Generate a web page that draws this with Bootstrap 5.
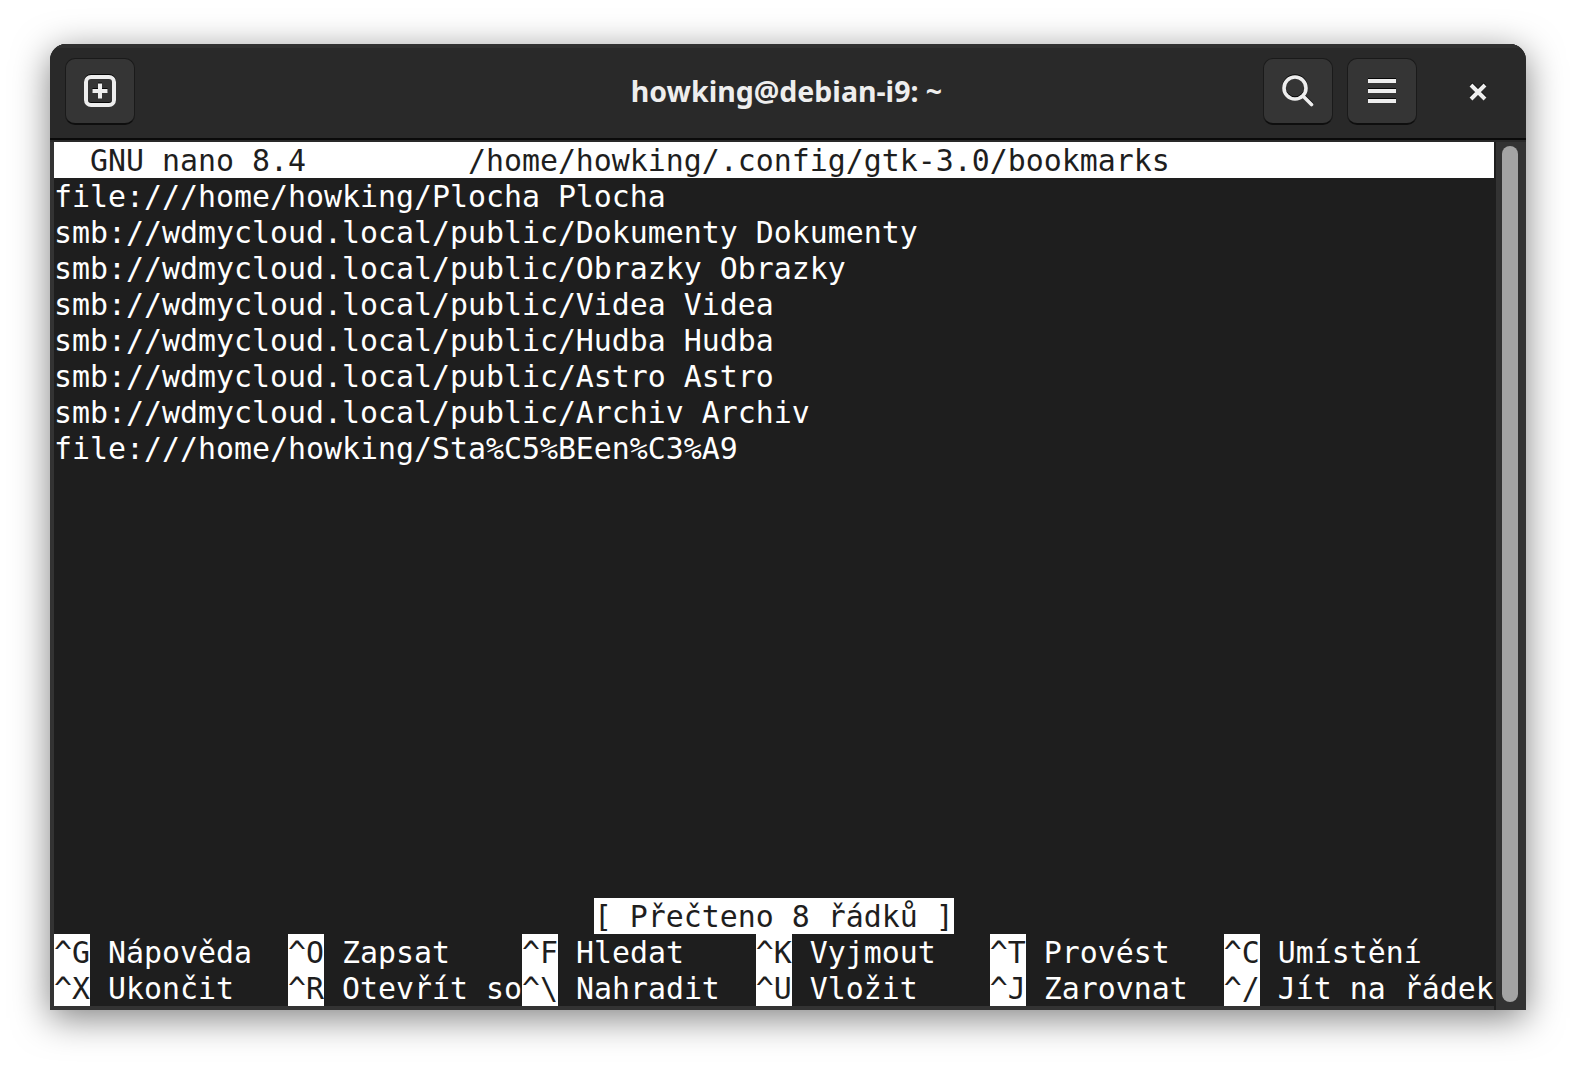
<!DOCTYPE html>
<html lang="cs">
<head>
<meta charset="utf-8">
<title>howking@debian-i9: ~</title>
<link href="https://cdn.jsdelivr.net/npm/bootstrap@5.3.0/dist/css/bootstrap.min.css" rel="stylesheet">
<style>
html,body{height:100%;background:#fff;overflow:hidden}
.shell{padding:44px 50px 56px 50px;height:1066px}
.win{height:966px;background:#1e1e1e;border-radius:16px 16px 0 0;box-shadow:0 8px 36px rgba(0,0,0,.5);overflow:hidden}
.tbar{height:94px;background:#292929;border-top:4px solid #303030;padding:10px 13px 0 15px;box-sizing:border-box}
.tside{flex:1 1 0}
.tbtn{width:70px;height:67px;background:#353535;border-radius:10px;border:1px solid #1a1a1a;border-bottom:2px solid #0e0e0e;box-sizing:border-box}
.tbtn svg,.closebox svg{filter:drop-shadow(0 -1px 0 rgba(0,0,0,.85))}
.tgap{margin-right:14px}
.ttl{font:700 28.5px "Noto Sans",sans-serif;color:#eee;height:67px;line-height:66px;margin-right:5px}
.closebox{width:70px;height:67px;margin-left:26px}
.sep{height:2px;background:#292929;border-top:2px solid #0a0a0a;box-sizing:content-box}
.termedge{width:4px;background:#333}
.term{width:1440px;background:#1e1e1e;font:29.9px/37px "DejaVu Sans Mono",monospace;color:#fff}
.ln{height:36px;overflow:hidden;white-space:pre}
.inv{background:#fff;color:#1e1e1e}
span.inv{display:inline-block;height:36px;vertical-align:top}
.termgap{width:2px;background:#1e1e1e}
.sbar{width:30px;background:#333;padding:4px 8px 8px 6px}
.thumb{width:16px;height:100%;background:#a4a4a4;border-radius:8px}
.botedge{height:4px;background:#333}
</style>
</head>
<body>
<div class="shell">
<div class="win d-flex flex-column">
  <div class="tbar d-flex align-items-start flex-shrink-0">
    <div class="tside d-flex">
      <div class="tbtn d-flex align-items-center justify-content-center">
        <svg width="32" height="32" viewBox="0 0 32 32"><rect x="2" y="2" width="28" height="28" rx="5" fill="none" stroke="#eee" stroke-width="4"/><path d="M16 8.5v15M8.5 16h15" stroke="#eee" stroke-width="4"/></svg>
      </div>
    </div>
    <div class="ttl text-center">howking@debian-i9: ~</div>
    <div class="tside d-flex justify-content-end">
      <div class="tbtn tgap d-flex align-items-center justify-content-center">
        <svg width="32" height="32" viewBox="0 0 32 32"><circle cx="13" cy="13" r="11" fill="none" stroke="#eee" stroke-width="3.6"/><path d="M21.5 21.5l8 8" stroke="#eee" stroke-width="3.6" stroke-linecap="round"/></svg>
      </div>
      <div class="tbtn d-flex align-items-center justify-content-center">
        <svg width="28" height="26" viewBox="0 0 28 26"><path d="M0 3h28M0 13h28M0 23h28" stroke="#eee" stroke-width="4"/></svg>
      </div>
      <div class="closebox d-flex align-items-center justify-content-center">
        <svg width="18" height="18" viewBox="0 0 18 18"><path d="M2 2l14 14M16 2L2 16" stroke="#eee" stroke-width="4"/></svg>
      </div>
    </div>
  </div>
  <div class="sep flex-shrink-0"></div>
  <div class="d-flex flex-grow-1" style="min-height:0">
    <div class="termedge"></div>
    <div class="term">
<div class="ln inv">  GNU nano 8.4         /home/howking/.config/gtk-3.0/bookmarks</div>
<div class="ln">file:///home/howking/Plocha Plocha</div>
<div class="ln">smb://wdmycloud.local/public/Dokumenty Dokumenty</div>
<div class="ln">smb://wdmycloud.local/public/Obrazky Obrazky</div>
<div class="ln">smb://wdmycloud.local/public/Videa Videa</div>
<div class="ln">smb://wdmycloud.local/public/Hudba Hudba</div>
<div class="ln">smb://wdmycloud.local/public/Astro Astro</div>
<div class="ln">smb://wdmycloud.local/public/Archiv Archiv</div>
<div class="ln">file:///home/howking/Sta%C5%BEen%C3%A9</div>
<div class="ln"></div><div class="ln"></div><div class="ln"></div><div class="ln"></div><div class="ln"></div><div class="ln"></div><div class="ln"></div><div class="ln"></div><div class="ln"></div><div class="ln"></div><div class="ln"></div><div class="ln"></div>
<div class="ln">                              <span class="inv">[ Přečteno 8 řádků ]</span></div>
<div class="ln"><span class="inv">^G</span> Nápověda  <span class="inv">^O</span> Zapsat    <span class="inv">^F</span> Hledat    <span class="inv">^K</span> Vyjmout   <span class="inv">^T</span> Provést   <span class="inv">^C</span> Umístění</div>
<div class="ln"><span class="inv">^X</span> Ukončit   <span class="inv">^R</span> Otevřít so<span class="inv">^\</span> Nahradit  <span class="inv">^U</span> Vložit    <span class="inv">^J</span> Zarovnat  <span class="inv">^/</span> Jít na řádek</div>
<div class="botedge"></div>
    </div>
    <div class="termgap"></div>
    <div class="sbar"><div class="thumb"></div></div>
  </div>
</div>
</div>
<script src="https://cdn.jsdelivr.net/npm/bootstrap@5.3.0/dist/js/bootstrap.bundle.min.js"></script>
</body>
</html>
